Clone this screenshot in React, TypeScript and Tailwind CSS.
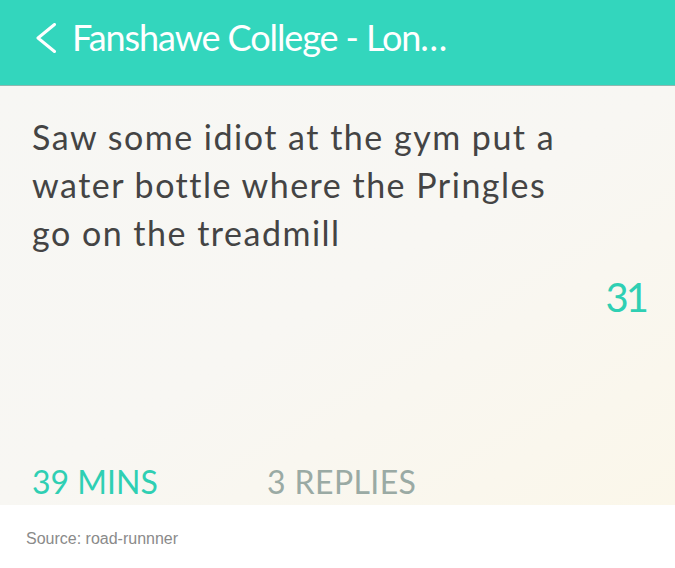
import React from 'react'

export default function App() {
  return (
    <div className="w-[675px] h-[568px] bg-white overflow-hidden" style={{ fontFamily: 'Lato, "Noto Sans", sans-serif' }}>
      {/* Header */}
      <div className="h-[86px] bg-[#33d6bd] border-b border-[#8fb8b0] flex items-center pl-[35px] pb-[12px]">
        <svg width="22" height="30" viewBox="0 0 22 30" className="mr-[15px] mt-[2px]">
          <path d="M19.5 1.5 L3 15 L19.5 28.5" stroke="white" strokeWidth="3" fill="none" strokeLinecap="round" strokeLinejoin="round" />
        </svg>
        <h1 className="text-white text-[36px] leading-none tracking-[-1.1px]">Fanshawe College - Lon…</h1>
      </div>

      {/* Post */}
      <div className="h-[419px] bg-gradient-to-br from-[#f7f7f4] via-[#f8f7f3] to-[#fbf7ea] flex flex-col px-[32px]">
        <p className="mt-[27px] text-[#444444] text-[34px] leading-[48px] tracking-[1.5px] max-w-[545px]">
          Saw some idiot at the gym put a water bottle where the Pringles go on the treadmill
        </p>
        <div className="self-end mt-[20px] mr-[-3px] text-[#2fcfb3] text-[40px] leading-none tracking-[-3px]">31</div>
        <div className="mt-auto mb-[7px] flex items-center text-[32px] leading-none">
          <span className="text-[#2fcfb3] w-[235px]">39 MINS</span>
          <span className="text-[#9aaaa4] tracking-[0.4px]">3 REPLIES</span>
        </div>
      </div>

      {/* Caption */}
      <div className="pl-[26px] pt-[22px] text-[#8a8a8a] text-[16px]" style={{ fontFamily: '"Liberation Sans", Arial, sans-serif' }}>
        Source: road-runnner
      </div>
    </div>
  )
}
